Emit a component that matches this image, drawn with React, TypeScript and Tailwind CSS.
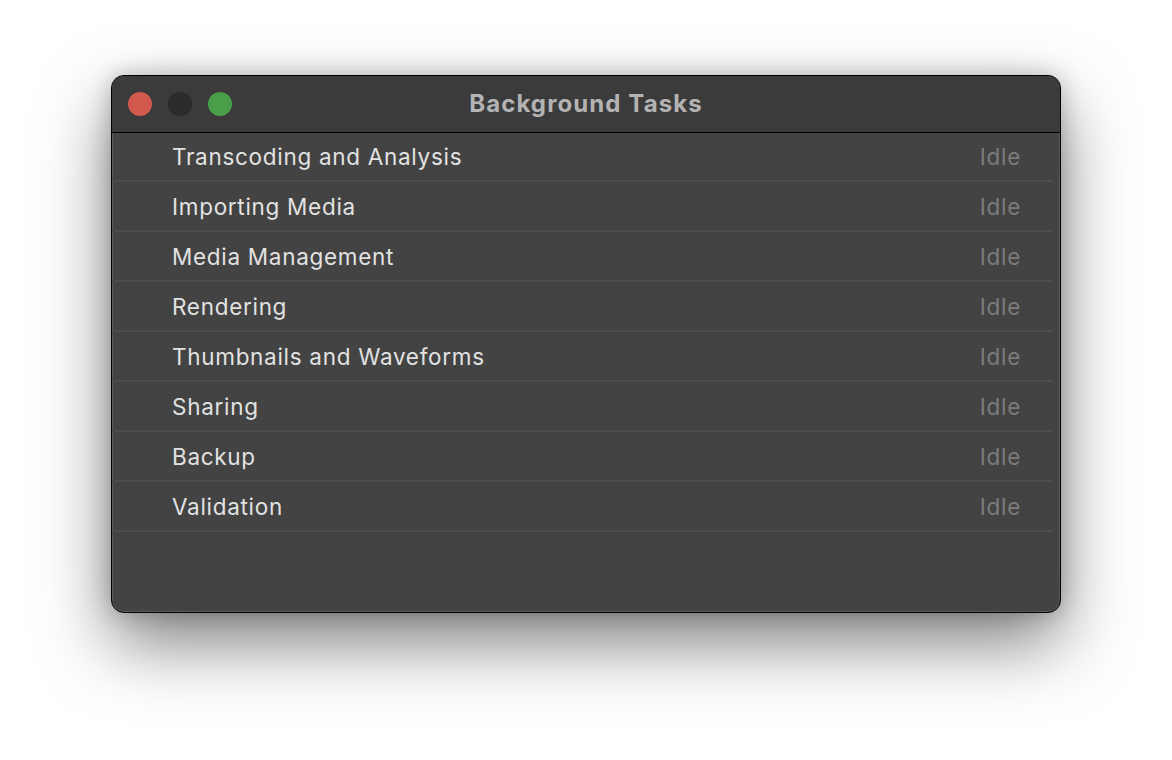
const tasks = [
  "Transcoding and Analysis",
  "Importing Media",
  "Media Management",
  "Rendering",
  "Thumbnails and Waveforms",
  "Sharing",
  "Backup",
  "Validation",
];

export default function App() {
  return (
    <div
      className="h-[760px] w-[1172px] bg-white pl-[111px] pt-[75px]"
      style={{ fontFamily: "Inter, 'Noto Sans', sans-serif" }}
    >
      <div className="flex h-[538px] w-[950px] flex-col overflow-hidden rounded-[13px] border border-black bg-[#434343] shadow-[0_30px_70px_rgba(0,0,0,0.5),0_0_22px_rgba(0,0,0,0.22)] ring-1 ring-inset ring-[#5a5a5a]">
        <div className="relative flex h-[57px] shrink-0 items-center border-b border-black bg-[#3b3b3b] px-[16px]">
          <div className="flex gap-[16px]">
            <span className="h-[24px] w-[24px] rounded-full bg-[#d1594d]" />
            <span className="h-[24px] w-[24px] rounded-full bg-[#2c2c2c]" />
            <span className="h-[24px] w-[24px] rounded-full bg-[#4a9e48]" />
          </div>
          <h1 className="absolute inset-x-0 text-center text-[24px] font-bold tracking-[1.1px] text-[#b3b3b3]">
            Background Tasks
          </h1>
        </div>
        <ul className="-mt-px mr-[7px] flex flex-col">
          {tasks.map((t) => (
            <li
              key={t}
              className="flex h-[50px] items-center justify-between border-b-2 border-[#4d4d4d] pl-[60px] pr-[32px] pt-[2px] text-[22.5px] tracking-[0.7px]"
            >
              <span className="text-[#e2e2e2]">{t}</span>
              <span className="text-[#7c7c7c]">Idle</span>
            </li>
          ))}
        </ul>
      </div>
    </div>
  );
}
